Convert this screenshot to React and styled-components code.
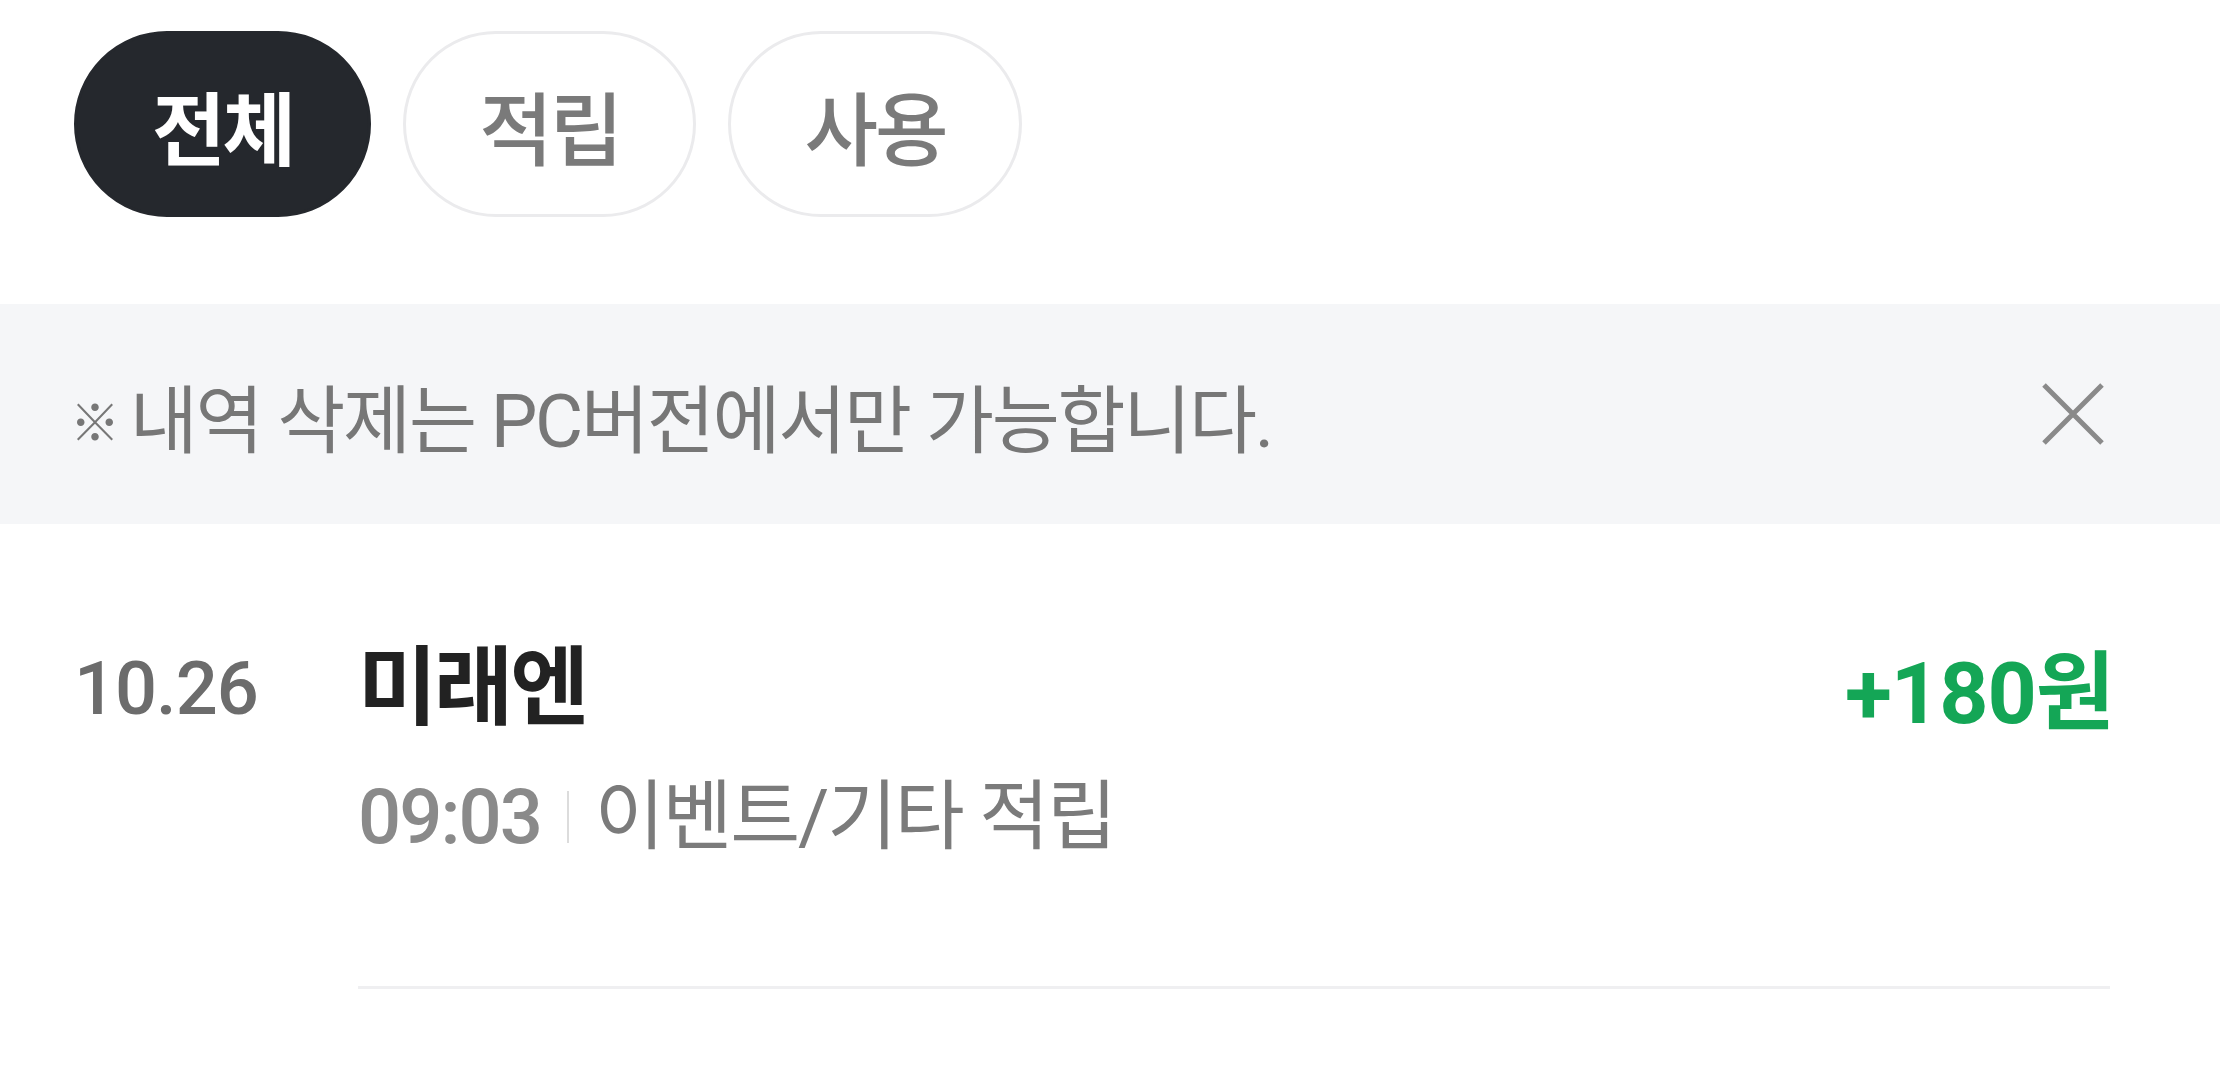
import React from 'react';
import styled, { createGlobalStyle } from 'styled-components';

const GlobalStyle = createGlobalStyle`
  html, body {
    margin: 0;
    padding: 0;
    background: #ffffff;
  }
  body {
    font-family: Roboto, "Noto Sans CJK KR", sans-serif;
  }
`;

const Page = styled.div`
  width: 2220px;
  min-height: 1080px;
  background: #fff;
`;

const TabBar = styled.div`
  display: flex;
  gap: 32px;
  padding: 31px 110px 0 74px;
`;

const Tab = styled.button`
  height: 186px;
  padding: 0 ${p => (p.$active ? '75px' : '73px')};
  border-radius: 93px;
  border: 3px solid ${p => (p.$active ? '#25282d' : '#ebebed')};
  background: ${p => (p.$active ? '#25282d' : '#fff')};
  color: ${p => (p.$active ? '#fff' : '#7a7a7a')};
  font-family: "Noto Sans CJK KR", sans-serif;
  font-size: 80px;
  font-weight: ${p => (p.$active ? 700 : 500)};
  letter-spacing: -3px;
  display: flex;
  align-items: center;
  justify-content: center;
  cursor: pointer;
`;

const Notice = styled.div`
  margin-top: 87px;
  height: 220px;
  background: #f5f6f8;
  display: flex;
  align-items: center;
  justify-content: space-between;
  padding: 0 110px 0 74px;
`;

const NoticeText = styled.p`
  margin: 0;
  font-size: 74px;
  letter-spacing: -2.3px;
  color: #777;
  font-weight: 400;
`;

const Mark = styled.span`
  display: inline-block;
  font-size: 50px;
  font-weight: 700;
  margin: 0 12px 0 -4px;
  vertical-align: 6px;
`;

const CloseButton = styled.button`
  width: 84px;
  height: 84px;
  padding: 0 6px 0 0;
  border: none;
  background: none;
  display: flex;
  align-items: center;
  justify-content: flex-end;
  cursor: pointer;
`;

const List = styled.ul`
  list-style: none;
  margin: 0;
  padding: 0 110px 0 74px;
`;

const Item = styled.li`
  display: grid;
  grid-template-columns: 284px 1fr auto;
  align-items: start;
  padding-top: 120px;
`;

const DateCell = styled.span`
  font-size: 74px;
  line-height: 90px;
  font-weight: 500;
  color: #6c6c6c;
  letter-spacing: -1px;
`;

const Body = styled.div`
  display: flex;
  flex-direction: column;
  gap: 38px;
  padding-bottom: 124px;
  border-bottom: 3px solid #efeff1;
`;

const Title = styled.span`
  font-size: 86px;
  line-height: 90px;
  font-weight: 700;
  color: #222;
  letter-spacing: -3px;
`;

const Meta = styled.div`
  display: flex;
  align-items: center;
  gap: 26px;
  color: #7b7b7b;
  font-size: 76px;
  line-height: 90px;
`;

const Time = styled.span`
  font-weight: 500;
  color: #8a8a8a;
  letter-spacing: -2px;
`;

const Separator = styled.span`
  width: 2px;
  height: 52px;
  background: #dcdcdc;
`;

const Kind = styled.span`
  letter-spacing: -2.2px;
`;

const Amount = styled.span`
  grid-column: 3;
  grid-row: 1;
  font-size: 86px;
  line-height: 90px;
  font-weight: 700;
  color: #14a656;
  letter-spacing: -1px;
  margin: 5px -4px 0 0;
`;

const BodyCell = styled.div`
  grid-column: 2 / 4;
  grid-row: 1;
`;

const App = () => {
  return (
    <Page>
      <GlobalStyle />
      <TabBar>
        <Tab $active>전체</Tab>
        <Tab>적립</Tab>
        <Tab>사용</Tab>
      </TabBar>

      <Notice>
        <NoticeText>
          <Mark>※</Mark>내역 삭제는 PC버전에서만 가능합니다.
        </NoticeText>
        <CloseButton aria-label="닫기">
          <svg width="62" height="62" viewBox="0 0 62 62">
            <path d="M2 2 L60 60 M60 2 L2 60" stroke="#8a8a8a" strokeWidth="5" fill="none" />
          </svg>
        </CloseButton>
      </Notice>

      <List>
        <Item>
          <DateCell>10.26</DateCell>
          <BodyCell>
            <Body>
              <Title>미래엔</Title>
              <Meta>
                <Time>09:03</Time>
                <Separator />
                <Kind>이벤트/기타 적립</Kind>
              </Meta>
            </Body>
          </BodyCell>
          <Amount>+180원</Amount>
        </Item>
      </List>
    </Page>
  );
};

export default App;
